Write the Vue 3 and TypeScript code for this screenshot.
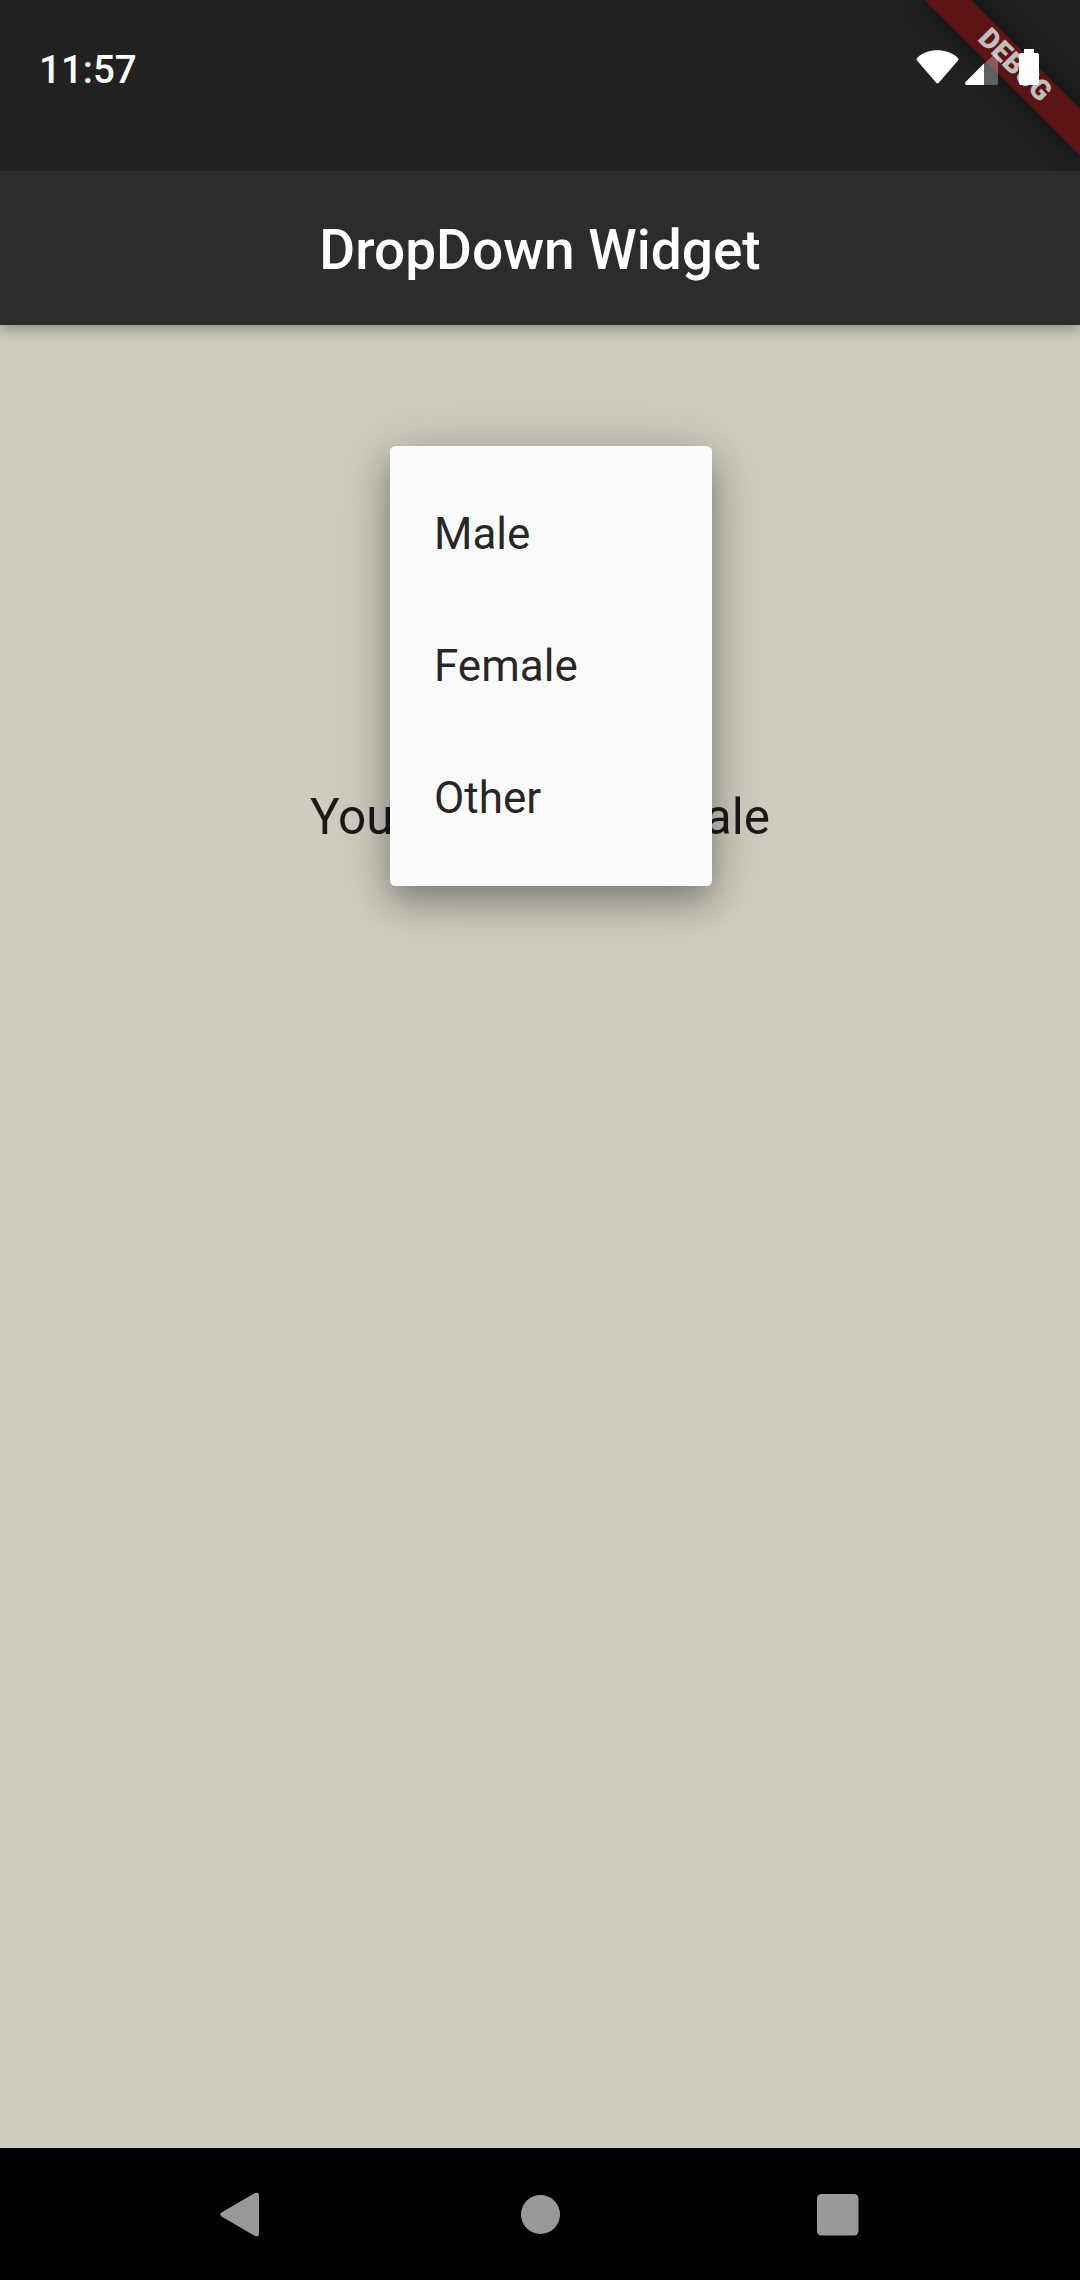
<script setup lang="ts">
import { ref } from 'vue'

const time = '11:57'
const title = 'DropDown Widget'
const options: string[] = ['Male', 'Female', 'Other']
const selected = ref('Female')
</script>

<template>
  <div class="screen">
    <header class="top">
      <div class="status">
        <span class="time">{{ time }}</span>
        <svg class="sys" width="124" height="38" viewBox="0 0 124 38" aria-hidden="true">
          <path d="M1.500 8.500C12 -1.200 30.500 -1.200 41.500 8.500Q43.200 10 42 11.500L23 33.500Q21.500 35.200 20 33.500L1 11.500Q-.2 10 1.500 8.500Z" fill="#fff" />
          <path d="M68 14.500 79.500 4.500Q82 3.500 82 6.500V34Q82 36 80 36H68Z" fill="#fff" fill-opacity=".3" />
          <path d="M68 14.500V36H50.500Q48.200 35 49.500 33Z" fill="#fff" />
          <path d="M108 0H118V4H121Q123 4 123 6V34Q123 36 121 36H105Q103 36 103 34V6Q103 4 105 4H108Z" fill="#fff" />
        </svg>
      </div>
      <h1 class="title">{{ title }}</h1>
      <div class="banner"><div class="ribbon">DEBUG</div></div>
      <div class="scrim"></div>
    </header>
    <main class="content">
      <p class="result">You Selected {{ selected }}</p>
      <ul class="menu">
        <li v-for="o in options" :key="o" @click="selected = o">{{ o }}</li>
      </ul>
    </main>
    <nav class="nav">
      <svg width="1080" height="132" viewBox="0 0 1080 132" fill="#999" aria-hidden="true">
        <path d="M221.500 64.500 254.500 45.200Q259 43.500 259 47V86Q259 89.800 254.500 87.800L221.500 68.500Q219 66.500 221.500 64.500Z" />
        <circle cx="540.500" cy="66.500" r="19.500" />
        <rect x="817" y="46" width="41.500" height="41.500" rx="4.500" />
      </svg>
    </nav>
  </div>
</template>

<style>
body {
  margin: 0;
}
</style>

<style scoped>
.screen {
  width: 1080px;
  height: 2280px;
  display: flex;
  flex-direction: column;
  overflow: hidden;
  font-family: Roboto, sans-serif;
  background: #cecbbf;
}
.top {
  position: relative;
  z-index: 1;
  height: 325px;
  flex: none;
  display: flex;
  flex-direction: column;
  background: #2c2c2c;
  box-shadow: 0 3px 14px 1px rgba(0, 0, 0, 0.32);
}
.status {
  position: relative;
  z-index: 3;
  height: 171px;
  flex: none;
  box-sizing: border-box;
  padding: 44px 40px 0 39px;
  display: flex;
  justify-content: space-between;
  align-items: flex-start;
  color: #fff;
}
.time {
  font-size: 38.5px;
  line-height: 52px;
  font-weight: 500;
}
.sys {
  display: block;
  margin-top: 5px;
}
.title {
  margin: 0;
  height: 154px;
  line-height: 158px;
  text-align: center;
  font-size: 55px;
  font-weight: 500;
  color: #fff;
}
.banner {
  position: absolute;
  top: 0;
  right: 0;
  z-index: 1;
  width: 260px;
  height: 260px;
  overflow: hidden;
}
.ribbon {
  position: absolute;
  left: 150px;
  top: 77px;
  width: 220px;
  height: 33px;
  line-height: 30px;
  transform-origin: 110px -77px;
  transform: rotate(45deg);
  text-align: center;
  font-size: 28.05px;
  font-weight: 900;
  color: #fff;
  background: linear-gradient(rgba(183, 28, 28, 0.627), rgba(183, 28, 28, 0.627)) rgba(0, 0, 0, 0.43);
  box-shadow: 0 0 22px rgba(0, 0, 0, 0.5);
}
.scrim {
  position: absolute;
  inset: 0 0 auto;
  z-index: 2;
  height: 171px;
  background: rgba(0, 0, 0, 0.25);
}
.content {
  position: relative;
  flex: 1;
}
.result {
  margin: 0;
  padding-top: 463px;
  text-align: center;
  font-size: 49.5px;
  line-height: 58px;
  color: rgba(0, 0, 0, 0.87);
}
.menu {
  position: absolute;
  left: 390px;
  top: 121px;
  width: 322px;
  height: 440px;
  box-sizing: border-box;
  margin: 0;
  padding: 22px 44px;
  list-style: none;
  border-radius: 5.5px;
  background: #fafafa;
  color: rgba(0, 0, 0, 0.87);
  box-shadow: 0 15px 32px rgba(0, 0, 0, 0.29), 0 8px 64px rgba(0, 0, 0, 0.18);
}
.menu li {
  height: 132px;
  line-height: 132px;
  font-size: 44px;
}
.nav {
  height: 132px;
  flex: none;
  background: #000;
}
.nav svg {
  display: block;
}
</style>
